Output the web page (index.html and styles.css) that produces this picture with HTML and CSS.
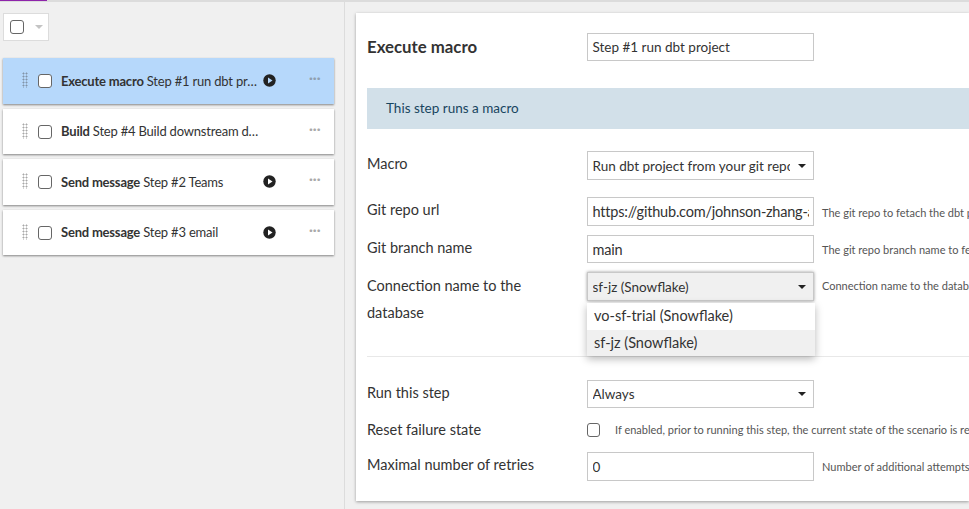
FILE: index.html
```html
<!DOCTYPE html>
<html lang="en">
<head>
<meta charset="utf-8">
<title>Scenario steps</title>
<link rel="stylesheet" href="styles.css">
</head>
<body>
<div class="topline"><div class="tab-mark"></div></div>
<div class="page">
  <aside class="steps">
    <div class="bulk"><span class="check"></span><svg class="bulk-caret" width="8" height="4" viewBox="0 0 8 4"><path d="M0 0h8L4 4z"/></svg></div>
    <div class="step-list">
      <div class="step selected">
        <span class="grip"></span><span class="check"></span>
        <span class="step-text"><b>Execute macro</b> Step #1 run dbt project</span>
        <svg class="play" width="13" height="13" viewBox="0 0 13 13"><circle cx="6.5" cy="6.5" r="6.2"/><path class="tri" d="M5 3.5l4.5 3-4.5 3z"/></svg>
        <span class="dots">···</span>
      </div>
      <div class="step">
        <span class="grip"></span><span class="check"></span>
        <span class="step-text wide"><b>Build</b> Step #4 Build downstream datasets</span>
        <span class="dots">···</span>
      </div>
      <div class="step">
        <span class="grip"></span><span class="check"></span>
        <span class="step-text"><b>Send message</b> Step #2 Teams</span>
        <svg class="play" width="13" height="13" viewBox="0 0 13 13"><circle cx="6.5" cy="6.5" r="6.2"/><path class="tri" d="M5 3.5l4.5 3-4.5 3z"/></svg>
        <span class="dots">···</span>
      </div>
      <div class="step">
        <span class="grip"></span><span class="check"></span>
        <span class="step-text"><b>Send message</b> Step #3 email</span>
        <svg class="play" width="13" height="13" viewBox="0 0 13 13"><circle cx="6.5" cy="6.5" r="6.2"/><path class="tri" d="M5 3.5l4.5 3-4.5 3z"/></svg>
        <span class="dots">···</span>
      </div>
    </div>
  </aside>
  <main class="detail">
    <div class="card">
      <div class="row head">
        <h1>Execute macro</h1>
        <div class="field">Step #1 run dbt project</div>
      </div>
      <div class="banner">This step runs a macro</div>
      <div class="row r-macro">
        <label>Macro</label>
        <div class="field select"><span class="val">Run dbt project from your git repo</span><span class="caret"></span></div>
      </div>
      <div class="row r-url">
        <label>Git repo url</label>
        <div class="field"><span class="val big">https://github.com/johnson-zhang-a/dbt-project</span></div>
        <span class="hint">The git repo to fetach the dbt project from</span>
      </div>
      <div class="row r-branch">
        <label>Git branch name</label>
        <div class="field"><span class="val big">main</span></div>
        <span class="hint">The git repo branch name to fetch the dbt project from</span>
      </div>
      <div class="row r-conn">
        <label class="two">Connection name to the database</label>
        <div class="combo">
          <div class="field select open"><span class="val">sf-jz (Snowflake)</span><span class="caret"></span></div>
          <div class="menu">
            <div class="opt">vo-sf-trial (Snowflake)</div>
            <div class="opt hover">sf-jz (Snowflake)</div>
          </div>
        </div>
        <span class="hint">Connection name to the database to run the project on</span>
      </div>
      <hr>
      <div class="row r-run">
        <label>Run this step</label>
        <div class="field select"><span class="val">Always</span><span class="caret"></span></div>
      </div>
      <div class="row r-reset">
        <label>Reset failure state</label>
        <div class="reset"><span class="check"></span><span class="hint">If enabled, prior to running this step, the current state of the scenario is reset to successful</span></div>
      </div>
      <div class="row r-retries">
        <label>Maximal number of retries</label>
        <div class="field"><span class="val">0</span></div>
        <span class="hint">Number of additional attempts to run this step if it fails</span>
      </div>
    </div>
  </main>
</div>
</body>
</html>
```

FILE: styles.css
```css
* { box-sizing: border-box; }
html, body { margin: 0; height: 100%; overflow: hidden; }
body {
  background: #f0f0f0;
  color: #333;
  font-family: "Lato", "Noto Sans", sans-serif;
  font-size: 13px;
  width: 969px;
  height: 509px;
}
.topline { height: 2px; background: #dcdcdc; }
.tab-mark { width: 47px; height: 1px; background: #8e24aa; }
.page { display: flex; height: 507px; }

.steps { width: 345px; border-right: 1px solid #dcdcdc; padding: 11px 0 0 3px; flex: none; }
.bulk {
  width: 46px; height: 28px; background: #fff; border: 1px solid #dcdcdc;
  display: flex; align-items: center; padding-left: 6px; gap: 11px;
}
.bulk-caret { fill: #c4c4c4; }
.check {
  display: block; flex: none; width: 14px; height: 14px;
  border: 1px solid #666; border-radius: 3px; background: #fff;
}
.step-list { margin: 17px 0 0; display: flex; flex-direction: column; gap: 5px; }
.step {
  width: 331px; height: 45.5px; background: #fff;
  box-shadow: 0 1px 2px rgba(0,0,0,.45);
  display: flex; align-items: center; position: relative;
}
.step.selected { background: #b6d8fb; }
.grip {
  width: 6px; height: 16px; margin: -1px 0 0 19px; flex: none;
  background-image: radial-gradient(circle, #a8a8a8 .9px, transparent 1.1px);
  background-size: 3px 3px;
}
.selected .grip { background-image: radial-gradient(circle, #8294a8 .9px, transparent 1.1px); }
.step .check { margin: 1px 0 0 10px; }
.step-text {
  margin-left: 9px; width: 197px; font-size: 13px; white-space: nowrap; letter-spacing: -.2px;
  overflow: hidden; text-overflow: ellipsis; color: #333;
}
.step-text.wide { width: 200px; }
.step-text b { font-weight: 700; }
.play { position: absolute; left: 259.5px; top: 16px; fill: #222; }
.play .tri { fill: #fff; }
.selected .play .tri { fill: #b6d8fb; }
.dots {
  position: absolute; left: 306px; top: 13px; font-size: 14px; line-height: 14px;
  color: #aaa; letter-spacing: 0; font-weight: 700;
}
.selected .dots { color: #8f9fb0; }

.detail { flex: 1; min-width: 0; padding: 11px 0 0 11px; }
.card {
  height: 488px; background: #fff; padding: 20px 0 0 11px;
  box-shadow: 0 1px 3px rgba(0,0,0,.35); overflow: hidden;
}
.row { display: grid; grid-template-columns: 220px 227px max-content; align-items: start; white-space: nowrap; }
.row label { font-size: 14.5px; line-height: 20px; padding-top: 3px; color: #333; }
.head { align-items: center; }
h1 { margin: 0 0 2px; font-size: 16.8px; font-weight: 700; color: #333; }
.field {
  width: 227px; height: 29px; border: 1px solid #c8c8c8; background: #fff;
  display: flex; align-items: center; padding: 0 4.5px; font-size: 13.5px; color: #333; overflow: hidden;
}
.head .field, .r-branch .field, .r-run .field { height: 28px; }
.val { flex: 1; min-width: 0; overflow: hidden; white-space: nowrap; }
.val.big { font-size: 14.5px; letter-spacing: -.2px; }
.select { padding-right: 7px; gap: 8px; }
.caret {
  flex: none; width: 0; height: 0;
  border-left: 4px solid transparent; border-right: 4px solid transparent; border-top: 4px solid #222;
}
.field.open { background: #f0f0f0; box-shadow: 0 0 3px rgba(0,0,0,.4); }
.banner {
  margin-top: 27px; height: 41px; background: #d2e0e9; color: #18455f;
  font-size: 13.5px; padding: 0 0 2px 19px; display: flex; align-items: center;
}
.hint { font-size: 11px; color: #555; align-self: center; margin-left: 8px; }
.r-macro { margin-top: 22px; }
.r-url { margin-top: 17px; }
.r-url .hint { margin-top: 2px; }
.r-branch { margin-top: 9px; }
.r-conn { margin-top: 9px; }
.r-conn .hint { align-self: start; padding-top: 7px; }
.r-conn label { white-space: normal; width: 175px; line-height: 27px; padding-top: 0; height: 54px; }
.combo { position: relative; height: 29px; }
.menu {
  position: absolute; left: 0; top: 31px; width: 228px; background: #fff; z-index: 2;
  box-shadow: 0 3px 8px rgba(0,0,0,.28);
}
.opt { height: 26.5px; line-height: 26px; padding-left: 7px; font-size: 14.5px; color: #333; }
.opt.hover { background: #f0f0f0; }
hr { border: 0; border-top: 1px solid #e8e8e8; margin: 30px 0 0; height: 0; }
.r-run { margin-top: 23px; }
.r-reset { margin-top: 9px; }
.reset { display: flex; align-items: center; height: 24px; padding-top: 1px; grid-column: 2 / 4; }
.reset .check { width: 13px; height: 14px; }
.reset .hint { margin-left: 15px; }
.r-retries { margin-top: 11px; }
```
